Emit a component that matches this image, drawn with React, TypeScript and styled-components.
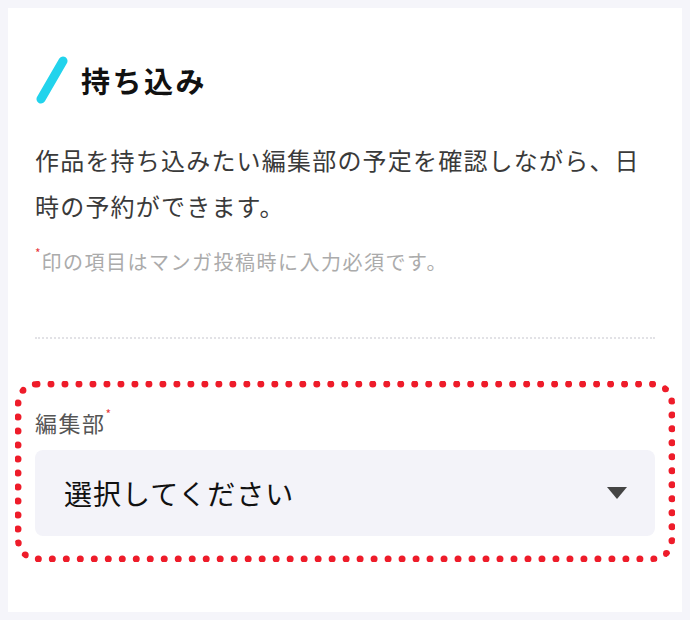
import React from 'react'
import styled, { createGlobalStyle } from 'styled-components'

const GlobalStyle = createGlobalStyle`
  body {
    margin: 0;
    background: #f5f5fa;
    font-family: "Noto Sans CJK JP", "Noto Sans", sans-serif;
  }
`

const Card = styled.section`
  margin: 8px;
  height: 604px;
  box-sizing: border-box;
  background: #ffffff;
  padding: 48px 27px 0;
`

const Heading = styled.h2`
  display: flex;
  align-items: center;
  gap: 12px;
  margin: 0;
  height: 48px;
  font-size: 29px;
  font-weight: 700;
  letter-spacing: 2.5px;
  color: #111111;
`

const Description = styled.p`
  margin: 33px 0 0;
  font-size: 24px;
  line-height: 46px;
  letter-spacing: 1.2px;
  color: #3a3a3a;
`

const Note = styled.p`
  margin: 18px 0 0;
  font-size: 20px;
  line-height: 30px;
  letter-spacing: 1.5px;
  color: #ababab;
`

const Mark = styled.sup<{ $size: number }>`
  color: #e8383d;
  font-size: ${(p) => p.$size}px;
  vertical-align: top;
  line-height: 1;
  margin-right: 1px;
  letter-spacing: 0;
`

const Divider = styled.hr`
  margin: 60px 0 0;
  border: 0;
  border-top: 2px dotted #e2e2e6;
`

const Highlight = styled.div`
  margin: 42px -20px 0;
  border: 7px dotted #ee1c2a;
  border-radius: 22px;
  padding: 20px 13px 19px;
`

const Label = styled.div`
  font-size: 22px;
  line-height: 28px;
  letter-spacing: 1.5px;
  color: #555555;
`

const Select = styled.div`
  margin-top: 14px;
  height: 86px;
  box-sizing: border-box;
  display: flex;
  align-items: center;
  justify-content: space-between;
  padding: 0 28px 0 29px;
  background: #f3f3f9;
  border-radius: 8px;
  font-size: 28px;
  letter-spacing: 1px;
  color: #111111;
`

const Slash = () => (
  <svg width="34" height="48" viewBox="0 0 34 48">
    <line x1="28" y1="5" x2="6" y2="43" stroke="#22d3ec" strokeWidth="9" strokeLinecap="round" />
  </svg>
)

const Caret = () => (
  <svg width="20" height="12" viewBox="0 0 20 12">
    <path d="M0 0h20L10 12z" fill="#444444" />
  </svg>
)

export default function App() {
  return (
    <>
      <GlobalStyle />
      <Card>
        <Heading>
          <Slash />
          持ち込み
        </Heading>
        <Description>
          作品を持ち込みたい編集部の予定を確認しながら、日時の予約ができます。
        </Description>
        <Note>
          <Mark $size={12}>*</Mark>印の項目はマンガ投稿時に入力必須です。
        </Note>
        <Divider />
        <Highlight>
          <Label>
            編集部<Mark $size={12}>*</Mark>
          </Label>
          <Select>
            選択してください
            <Caret />
          </Select>
        </Highlight>
      </Card>
    </>
  )
}
